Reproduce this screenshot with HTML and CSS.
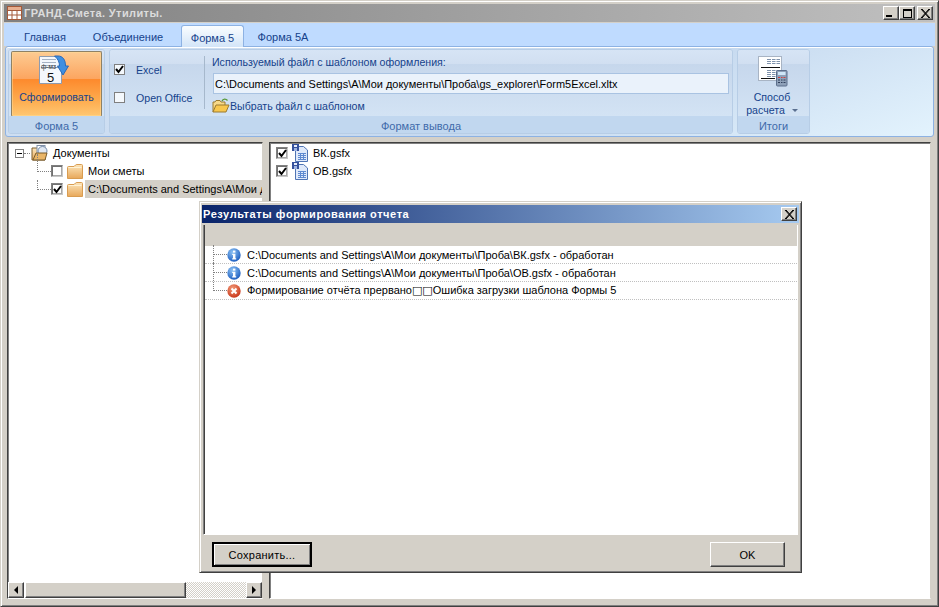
FILE: index.html
```html
<!DOCTYPE html>
<html lang="ru">
<head>
<meta charset="utf-8">
<title>ГРАНД-Смета. Утилиты.</title>
<link rel="stylesheet" href="styles.css">
</head>
<body>
<svg class="defs" width="0" height="0" aria-hidden="true">
  <defs>
    <linearGradient id="fold" x1="0" y1="0" x2="0" y2="1"><stop offset="0" stop-color="#fce6bc"/><stop offset="1" stop-color="#e8a85a"/></linearGradient>
    <radialGradient id="infoG" cx=".4" cy=".3" r=".8"><stop offset="0" stop-color="#8fc4f5"/><stop offset="1" stop-color="#0f52ba"/></radialGradient>
    <radialGradient id="errG" cx=".4" cy=".3" r=".8"><stop offset="0" stop-color="#f39a78"/><stop offset="1" stop-color="#c42c10"/></radialGradient>
    <symbol id="folder" viewBox="0 0 16 16">
      <path d="M.5 4.500Q.5 3.500 1.500 3.500H7L8.500 2Q9 1.500 10 1.500H14.500Q15.500 1.500 15.500 2.500V15.500H.5Z" fill="url(#fold)" stroke="#d99c50"/>
      <path d="M1.500 4.500H14.500" stroke="#fff2d4"/>
    </symbol>
    <symbol id="doc" viewBox="0 0 16 18">
      <path d="M3.500 2.500H11.500L15.500 6V17.500H3.500Z" fill="#dfe9fa" stroke="#4f74b4"/>
      <rect x="0" y="0" width="7" height="7" fill="#35519c"/>
      <rect x="2" y="1" width="3" height="2" fill="#e8eefc"/>
      <rect x="2" y="4" width="3" height="3" fill="#9fb4e0"/>
      <path d="M6 9.500H14M6 11.500H14M6 13.500H14M6 15.500H14M8.500 9V16M11.500 9V16" stroke="#5f8ad0"/>
    </symbol>
    <symbol id="info" viewBox="0 0 14 14">
      <circle cx="7" cy="7" r="6.7" fill="url(#infoG)"/>
      <rect x="6" y="2.6" width="2.4" height="2" fill="#fff"/>
      <path d="M5.2 5.8H8.4V10.2H9.2V11.4H5.2V10.2H6V7H5.2Z" fill="#fff"/>
    </symbol>
    <symbol id="err" viewBox="0 0 14 14">
      <circle cx="7" cy="7" r="6.7" fill="url(#errG)"/>
      <path d="M4.5 4.5L9.5 9.5M9.5 4.5L4.5 9.5" stroke="#fff" stroke-width="2"/>
    </symbol>
  </defs>
</svg>
<div class="window">
  <header class="titlebar">
    <svg class="app-icon" width="15" height="14" viewBox="0 0 15 14">
      <rect width="15" height="14" fill="#fff"/>
      <path d="M0 .5H15M0 4.500H15M0 9H15M0 13.500H15M.5 0V14M5 0V14M10 0V14M14.500 0V14" stroke="#a55a3a"/>
      <rect x="1" y="1" width="13" height="3" fill="#e8b090"/>
    </svg>
    <span class="title-text">ГРАНД-Смета. Утилиты.</span>
    <div class="caption-btns">
      <button class="cap cap-min"><span class="min-glyph"></span></button>
      <button class="cap cap-max"><span class="max-glyph"></span></button>
      <button class="cap cap-close"><svg width="10" height="9" viewBox="0 0 10 9"><path d="M1 0L9 9M2 0L10 9M9 0L1 9M10 0L2 9" stroke="#000" stroke-width="1"/></svg></button>
    </div>
  </header>

  <nav class="tabs">
    <div class="tab tab-1">Главная</div>
    <div class="tab tab-2">Объединение</div>
    <div class="tab tab-active">Форма 5</div>
    <div class="tab tab-4">Форма 5А</div>
  </nav>

  <section class="ribbon">
    <div class="group group-form">
      <div class="group-body">
        <button class="big-btn">
          <svg class="form-icon" width="31" height="30" viewBox="0 0 31 30">
            <path d="M1.500 1.500H20L23.500 4V28.500H1.500Z" fill="#f4f7fc" stroke="#8d9bb0"/>
            <path d="M4 4.500H18M4 7.500H18M4 10.500H18" stroke="#a6b2c4"/>
            <path d="M3 12.500H21" stroke="#8d9bb0"/>
            <text x="3" y="14" class="svg-fm">ф-мз</text>
            <text x="9" y="27" class="svg-five">5</text>
            <path d="M16.500 1H20C25 1 27.500 5 27.500 11H30.500L25 20L19.500 11H21.500C21.500 7 20 4 16.500 1Z" fill="#3f8fe0" stroke="#2a68b8"/>
          </svg>
          <span class="big-label">Сформировать</span>
        </button>
      </div>
      <div class="group-label">Форма 5</div>
    </div>

    <div class="group group-format">
      <div class="group-body format-body">
        <div class="radio-col">
          <label class="opt"><span class="rib-check"><svg width="9" height="9" viewBox="0 0 9 9"><path d="M1 4L3.500 7L8 1" fill="none" stroke="#000" stroke-width="2"/></svg></span><span class="opt-text">Excel</span></label>
          <label class="opt"><span class="rib-check"></span><span class="opt-text">Open Office</span></label>
        </div>
        <div class="vsep"></div>
        <div class="file-col">
          <div class="file-cap">Используемый файл с шаблоном оформления:</div>
          <div class="file-input">C:\Documents and Settings\A\Мои документы\Проба\gs_explorer\Form5Excel.xltx</div>
          <div class="file-pick">
            <svg width="18" height="15" viewBox="0 0 18 15">
              <path d="M1 14V4H3L4 2.500H8L9 4H13V7" fill="#f7d98a" stroke="#9a7a30"/>
              <path d="M1 14L4 7H17L14 14Z" fill="#f8c74e" stroke="#9a7a30"/>
              <path d="M10 3C11 .5 14 .5 15.500 2.500" fill="none" stroke="#5a9a3a" stroke-width="1.300"/>
            </svg>
            <span>Выбрать файл с шаблоном</span>
          </div>
        </div>
      </div>
      <div class="group-label">Формат вывода</div>
    </div>

    <div class="group group-total">
      <div class="group-body total-body">
        <svg class="calc-icon" width="31" height="31" viewBox="0 0 31 31">
          <rect x="1.500" y=".5" width="23" height="24" fill="#fff" stroke="#a8b4c4"/>
          <path d="M10 3.500H23M10 5.500H23M10 7.500H23M10 14.500H23M10 16.500H23M10 18.500H23M10 20.500H23" stroke="#7f93ad"/>
          <path d="M14.500 3V21M19 3V21" stroke="#fff"/>
          <path d="M4 11.500H23M4 22.500H18" stroke="#111"/>
          <rect x="19.500" y="14.500" width="10.500" height="15.500" rx="1" fill="#8ea0b8" stroke="#5c6f8c"/>
          <rect x="21" y="16" width="7.500" height="3" fill="#cfe6f8"/>
          <path d="M21 21.500H23M24 21.500H25.500M26.500 21.500H28.500" stroke="#d04040"/>
          <path d="M21 24H23M24 24H25.500M26.500 24H28.500M21 26.500H23M24 26.500H25.500M26.500 26.500H28.500" stroke="#31405c"/>
        </svg>
        <div class="total-text">Способ<br>расчета <span class="dropdown-tri"></span></div>
      </div>
      <div class="group-label">Итоги</div>
    </div>
  </section>

  <main class="content">
    <div class="pane pane-left">
      <div class="tree">
        <div class="tree-row tree-root">
          <span class="expander"></span>
          <span class="stub"></span>
          <svg class="root-icon" width="18" height="17" viewBox="0 0 18 17">
            <path d="M1 3H7L8 5H14V15H1Z" fill="url(#fold)" stroke="#7a5c2c"/>
            <rect x="6" y=".5" width="8" height="10" fill="#fff" stroke="#8090a8"/>
            <circle cx="11.500" cy="6" r="4.500" fill="#dfe7f2" stroke="#7088a8"/>
            <path d="M2 15L5 8H16L14 15Z" fill="#e9b568" stroke="#7a5c2c"/>
          </svg>
          <span class="tree-text">Документы</span>
        </div>
        <div class="tree-row tree-child">
          <span class="elbow elbow-first"></span>
          <span class="check"></span>
          <svg class="fold-icon" width="16" height="16"><use href="#folder"/></svg>
          <span class="tree-text">Мои сметы</span>
        </div>
        <div class="tree-row tree-child">
          <span class="elbow"></span>
          <span class="check"><svg width="9" height="9" viewBox="0 0 9 9"><path d="M1 4L3.500 7L8 1" fill="none" stroke="#000" stroke-width="2"/></svg></span>
          <svg class="fold-icon" width="16" height="16"><use href="#folder"/></svg>
          <span class="tree-text tree-selected">C:\Documents and Settings\A\Мои документы\Проба</span>
        </div>
      </div>
      <div class="hscroll">
        <button class="sb-btn"><span class="tri-left"></span></button>
        <div class="sb-thumb"></div>
        <div class="sb-track"></div>
        <button class="sb-btn"><span class="tri-right"></span></button>
      </div>
    </div>
    <div class="splitter"></div>
    <div class="pane pane-right">
      <div class="file-row">
        <span class="check"><svg width="9" height="9" viewBox="0 0 9 9"><path d="M1 4L3.500 7L8 1" fill="none" stroke="#000" stroke-width="2"/></svg></span>
        <svg class="doc-icon" width="16" height="18"><use href="#doc"/></svg>
        <span>ВК.gsfx</span>
      </div>
      <div class="file-row">
        <span class="check"><svg width="9" height="9" viewBox="0 0 9 9"><path d="M1 4L3.500 7L8 1" fill="none" stroke="#000" stroke-width="2"/></svg></span>
        <svg class="doc-icon" width="16" height="18"><use href="#doc"/></svg>
        <span>ОВ.gsfx</span>
      </div>
    </div>
  </main>

  <div class="dialog">
    <div class="dlg-title">
      <span>Результаты формирования отчета</span>
      <button class="cap cap-close dlg-close"><svg width="10" height="9" viewBox="0 0 10 9"><path d="M1 0L9 9M2 0L10 9M9 0L1 9M10 0L2 9" stroke="#000"/></svg></button>
    </div>
    <div class="dlg-list">
      <div class="dlg-head"></div>
      <div class="log-row">
        <span class="log-elbow log-elbow-first"></span>
        <svg class="log-icon" width="14" height="14"><use href="#info"/></svg>
        <span>C:\Documents and Settings\A\Мои документы\Проба\ВК.gsfx - обработан</span>
      </div>
      <div class="log-row">
        <span class="log-elbow"></span>
        <svg class="log-icon" width="14" height="14"><use href="#info"/></svg>
        <span>C:\Documents and Settings\A\Мои документы\Проба\ОВ.gsfx - обработан</span>
      </div>
      <div class="log-row">
        <span class="log-elbow"></span>
        <svg class="log-icon" width="14" height="14"><use href="#err"/></svg>
        <span>Формирование отчёта прервано<span class="tofu">□□</span>Ошибка загрузки шаблона Формы 5</span>
      </div>
    </div>
    <div class="dlg-foot">
      <button class="dlg-btn btn-save">Сохранить...</button>
      <button class="dlg-btn btn-ok">OK</button>
    </div>
  </div>
</div>
</body>
</html>
```
FILE: styles.css
```css
* { box-sizing: border-box; }
html, body { margin: 0; padding: 0; }
body { width: 939px; height: 607px; overflow: hidden; font-family: "Liberation Sans", Arial, sans-serif; font-size: 11px; color: #000; background: #d4d0c8; }
.defs { position: absolute; }
button { font: inherit; color: inherit; padding: 0; margin: 0; }

.window { position: relative; width: 939px; height: 607px; display: flex; flex-direction: column; background: #d4d0c8; border: 1px solid; border-color: #d4d0c8 #404040 #404040 #d4d0c8; box-shadow: inset 1px 1px 0 #fff, inset -1px -1px 0 #808080; padding: 3px; }

.titlebar { height: 18px; flex: none; display: flex; align-items: center; padding-left: 3px; background: linear-gradient(90deg, #808080, #c0c0c0); }
.app-icon { flex: none; margin-right: 2px; }
.title-text { color: #dcdcdc; font-weight: bold; font-size: 11px; letter-spacing: .4px; }
.caption-btns { margin-left: auto; display: flex; margin-right: 2px; }
.cap { width: 16px; height: 14px; background: #d4d0c8; border: 1px solid; border-color: #fff #404040 #404040 #fff; display: flex; align-items: center; justify-content: center; box-shadow: inset -1px -1px 0 #808080; }
.cap-close { margin-left: 2px; }
.min-glyph { width: 6px; height: 2px; background: #000; margin: 6px 4px 0 0; }
.max-glyph { width: 9px; height: 9px; border: 1px solid #000; border-top-width: 2px; }

.tabs { height: 23px; flex: none; display: flex; background: #bfdbff; padding: 2px 0 0 8px; margin-top: 1px; align-items: stretch; color: #15428b; }
.tab { display: flex; align-items: center; justify-content: center; padding-top: 2px; }
.tab-1 { width: 66px; }
.tab-2 { width: 100px; }
.tab-active { width: 63px; margin-left: 3px; background: linear-gradient(#fafdff, #d3e5f8); border: 1px solid #8db2e3; border-bottom: 0; border-radius: 3px 3px 0 0; position: relative; z-index: 1; margin-bottom: -1px; }
.tab-4 { width: 78px; }

.ribbon { height: 91px; flex: none; display: flex; gap: 4px; padding: 2px; border: 1px solid #8db2e3; border-radius: 3px; margin: 0 1px; background: linear-gradient(160deg, #d2e1f3, #c6d9ef 60%, #e3f3fd); box-shadow: 0 1px 0 #fff inset; }
.group { display: flex; flex-direction: column; border: 1px solid #b7cde6; border-radius: 3px; color: #15428b; overflow: hidden; font-size: 10.6px; }
.group-form { width: 97px; }
.group-format { width: 624px; }
.group-total { width: 73px; }
.group-body { flex: 1; background: linear-gradient(#d6e4f5 0, #d1dff1 14px, #c6d7ec 14px, #d3e3f4 100%); display: flex; min-height: 0; }
.group-label { height: 17px; flex: none; background: #c1d7ef; color: #3e6aaa; display: flex; align-items: center; justify-content: center; padding-top: 2px; font-size: 11px; }

.big-btn { width: 91px; height: 66px; margin: 1px 0 0 2px; border: 1px solid #8e8165; border-bottom-color: #f2c55c; border-radius: 2px; display: flex; flex-direction: column; align-items: center; color: #15428b; background: linear-gradient(#fdcb92 0, #fca560 42%, #fd8a2d 43%, #fdab4e 75%, #ffc772 100%); box-shadow: inset 0 0 0 1px rgba(255,220,150,.5); }
.form-icon { margin-top: 3px; margin-right: 6px; flex: none; }
.svg-fm { font: 6.5px "Liberation Sans", sans-serif; fill: #444; }
.svg-five { font: 13px "Liberation Sans", sans-serif; fill: #111; }
.big-label { margin-top: 6px; font-size: 10.6px; }

.format-body { align-items: stretch; }
.radio-col { width: 94px; padding: 13px 0 0 4px; display: flex; flex-direction: column; gap: 15px; }
.opt { display: flex; align-items: center; height: 13px; }
.rib-check { width: 11px; height: 11px; background: #f4f8fc; border: 1px solid #7f7f7f; display: flex; align-items: center; justify-content: center; flex: none; }
.opt-text { margin-left: 11px; }
.vsep { width: 1px; margin: 6px 0 7px 0; background: #a6b8cc; flex: none; }
.file-col { flex: 1; padding: 5px 0 0 7px; }
.file-cap { height: 14px; line-height: 14px; }
.file-input { width: 516px; height: 21px; margin: 4px 0 0 1px; background: #eaf2fb; border: 1px solid #a9c3e2; color: #000; line-height: 20px; padding-left: 1px; font-size: 10.95px; }
.file-pick { display: flex; align-items: center; margin-top: 3px; height: 17px; }
.total-body { flex-direction: column; align-items: center; }
.calc-icon { margin: 6px 0 0 -2px; flex: none; }
.total-text { text-align: center; line-height: 13px; margin: 4px 3px 0 0; }
.dropdown-tri { display: inline-block; width: 0; height: 0; margin-left: 4px; vertical-align: 2px; border: 3px solid transparent; border-top-color: #5a6f90; border-bottom: 0; }

.content { flex: 1; min-height: 0; display: flex; margin-top: 5px; padding: 0 4px 4px 3px; }
.pane { background: #fff; border: 1px solid; border-color: #404040 #d4d0c8 #fff #404040; box-shadow: inset 1px 1px 0 #808080; display: flex; flex-direction: column; }
.pane-left { width: 256px; overflow: hidden; }
.splitter { width: 6px; flex: none; }
.pane-right { flex: 1; padding: 1px 0 0 6px; }

.tree { flex: 1; padding: 1px 0 0 7px; min-height: 0; overflow: hidden; white-space: nowrap; }
.tree-row { display: flex; align-items: center; height: 18px; }
.expander { width: 9px; height: 9px; border: 1px solid #808080; flex: none; background: linear-gradient(#000, #000) center / 5px 1px no-repeat; }
.stub { width: 6px; border-top: 1px dotted #808080; flex: none; }
.root-icon { flex: none; margin-left: 1px; }
.tree-root .tree-text { margin-left: 4px; }
.tree-child { padding-left: 22px; }
.elbow { width: 14px; height: 10px; flex: none; align-self: flex-start; border-left: 1px dotted #808080; border-bottom: 1px dotted #808080; }
.elbow-first { height: 18px; margin-top: -8px; }
.check { width: 12px; height: 12px; flex: none; background: #fff; border: 1px solid; border-color: #808080 #c8c8c8 #c8c8c8 #808080; box-shadow: inset 1px 1px 0 #707070, inset -1px -1px 0 #a8a8a8; display: flex; align-items: center; justify-content: center; }
.fold-icon { margin: 0 0 0 4px; flex: none; }
.tree-child .tree-text { margin-left: 2px; padding: 0 3px; height: 18px; line-height: 18px; }
.tree-selected { background: #d4d0c8; flex: 1; }

.hscroll { height: 16px; flex: none; display: flex; }
.sb-btn { width: 16px; height: 16px; background: #d4d0c8; border: 1px solid; border-color: #fff #404040 #404040 #fff; box-shadow: inset -1px -1px 0 #808080; display: flex; align-items: center; justify-content: center; flex: none; }
.tri-left { width: 0; height: 0; border: 4px solid transparent; border-left: 0; border-right-color: #000; }
.tri-right { width: 0; height: 0; border: 4px solid transparent; border-right: 0; border-left-color: #000; }
.sb-thumb { width: 161px; margin-left: 1px; background: #d4d0c8; border: 1px solid; border-color: #fff #404040 #404040 #fff; box-shadow: inset -1px -1px 0 #808080; }
.sb-track { flex: 1; background: repeating-conic-gradient(#d4d0c8 0 25%, #fff 0 50%) 0 0 / 2px 2px; }

.file-row { display: flex; align-items: center; height: 18px; }
.doc-icon { margin-left: 4px; margin-right: 5px; flex: none; }

.dialog { position: absolute; left: 198px; top: 200px; width: 603px; height: 372px; display: flex; flex-direction: column; background: #d4d0c8; border: 1px solid; border-color: #d4d0c8 #404040 #404040 #d4d0c8; box-shadow: inset 1px 1px 0 #fff, inset -1px -1px 0 #808080; padding: 3px 2px; }
.dlg-title { height: 18px; flex: none; display: flex; align-items: center; padding-left: 1px; background: linear-gradient(90deg, #0a246a, #a6caf0); color: #fff; font-weight: bold; letter-spacing: .58px; }
.dlg-close { margin-left: auto; margin-right: 2px; }
.dlg-list { height: 310px; flex: none; margin: 2px 1px 0; background: #fff; border: 1px solid; border-color: #fff #fff #fff #808080; border-top: 0; box-shadow: inset 1px 0 0 #404040; padding: 0 0 0 1px; }
.dlg-head { height: 21px; background: #d4d0c8; }
.log-row { height: 18px; display: flex; align-items: center; border-bottom: 1px dotted #c0c0c0; padding-left: 8px; }
.log-elbow { width: 14px; height: 28px; flex: none; align-self: flex-start; margin-top: -19px; border-left: 1px dotted #808080; border-bottom: 1px dotted #808080; }
.log-elbow-first { height: 9px; margin-top: 0; }
.log-icon { flex: none; margin-right: 6px; }
.tofu { font-family: "DejaVu Sans", sans-serif; font-size: 11px; color: #000; }
.dlg-foot { flex: 1; display: flex; justify-content: space-between; align-items: flex-start; padding: 7px 14px 0 10px; }
.dlg-btn { height: 25px; background: #d4d0c8; border: 1px solid; border-color: #fff #404040 #404040 #fff; box-shadow: inset -1px -1px 0 #808080; }
.btn-save { width: 100px; letter-spacing: .25px; border: 2px solid #000; box-shadow: inset 1px 1px 0 #fff, inset -1px -1px 0 #808080; }
.btn-ok { width: 75px; }
```
